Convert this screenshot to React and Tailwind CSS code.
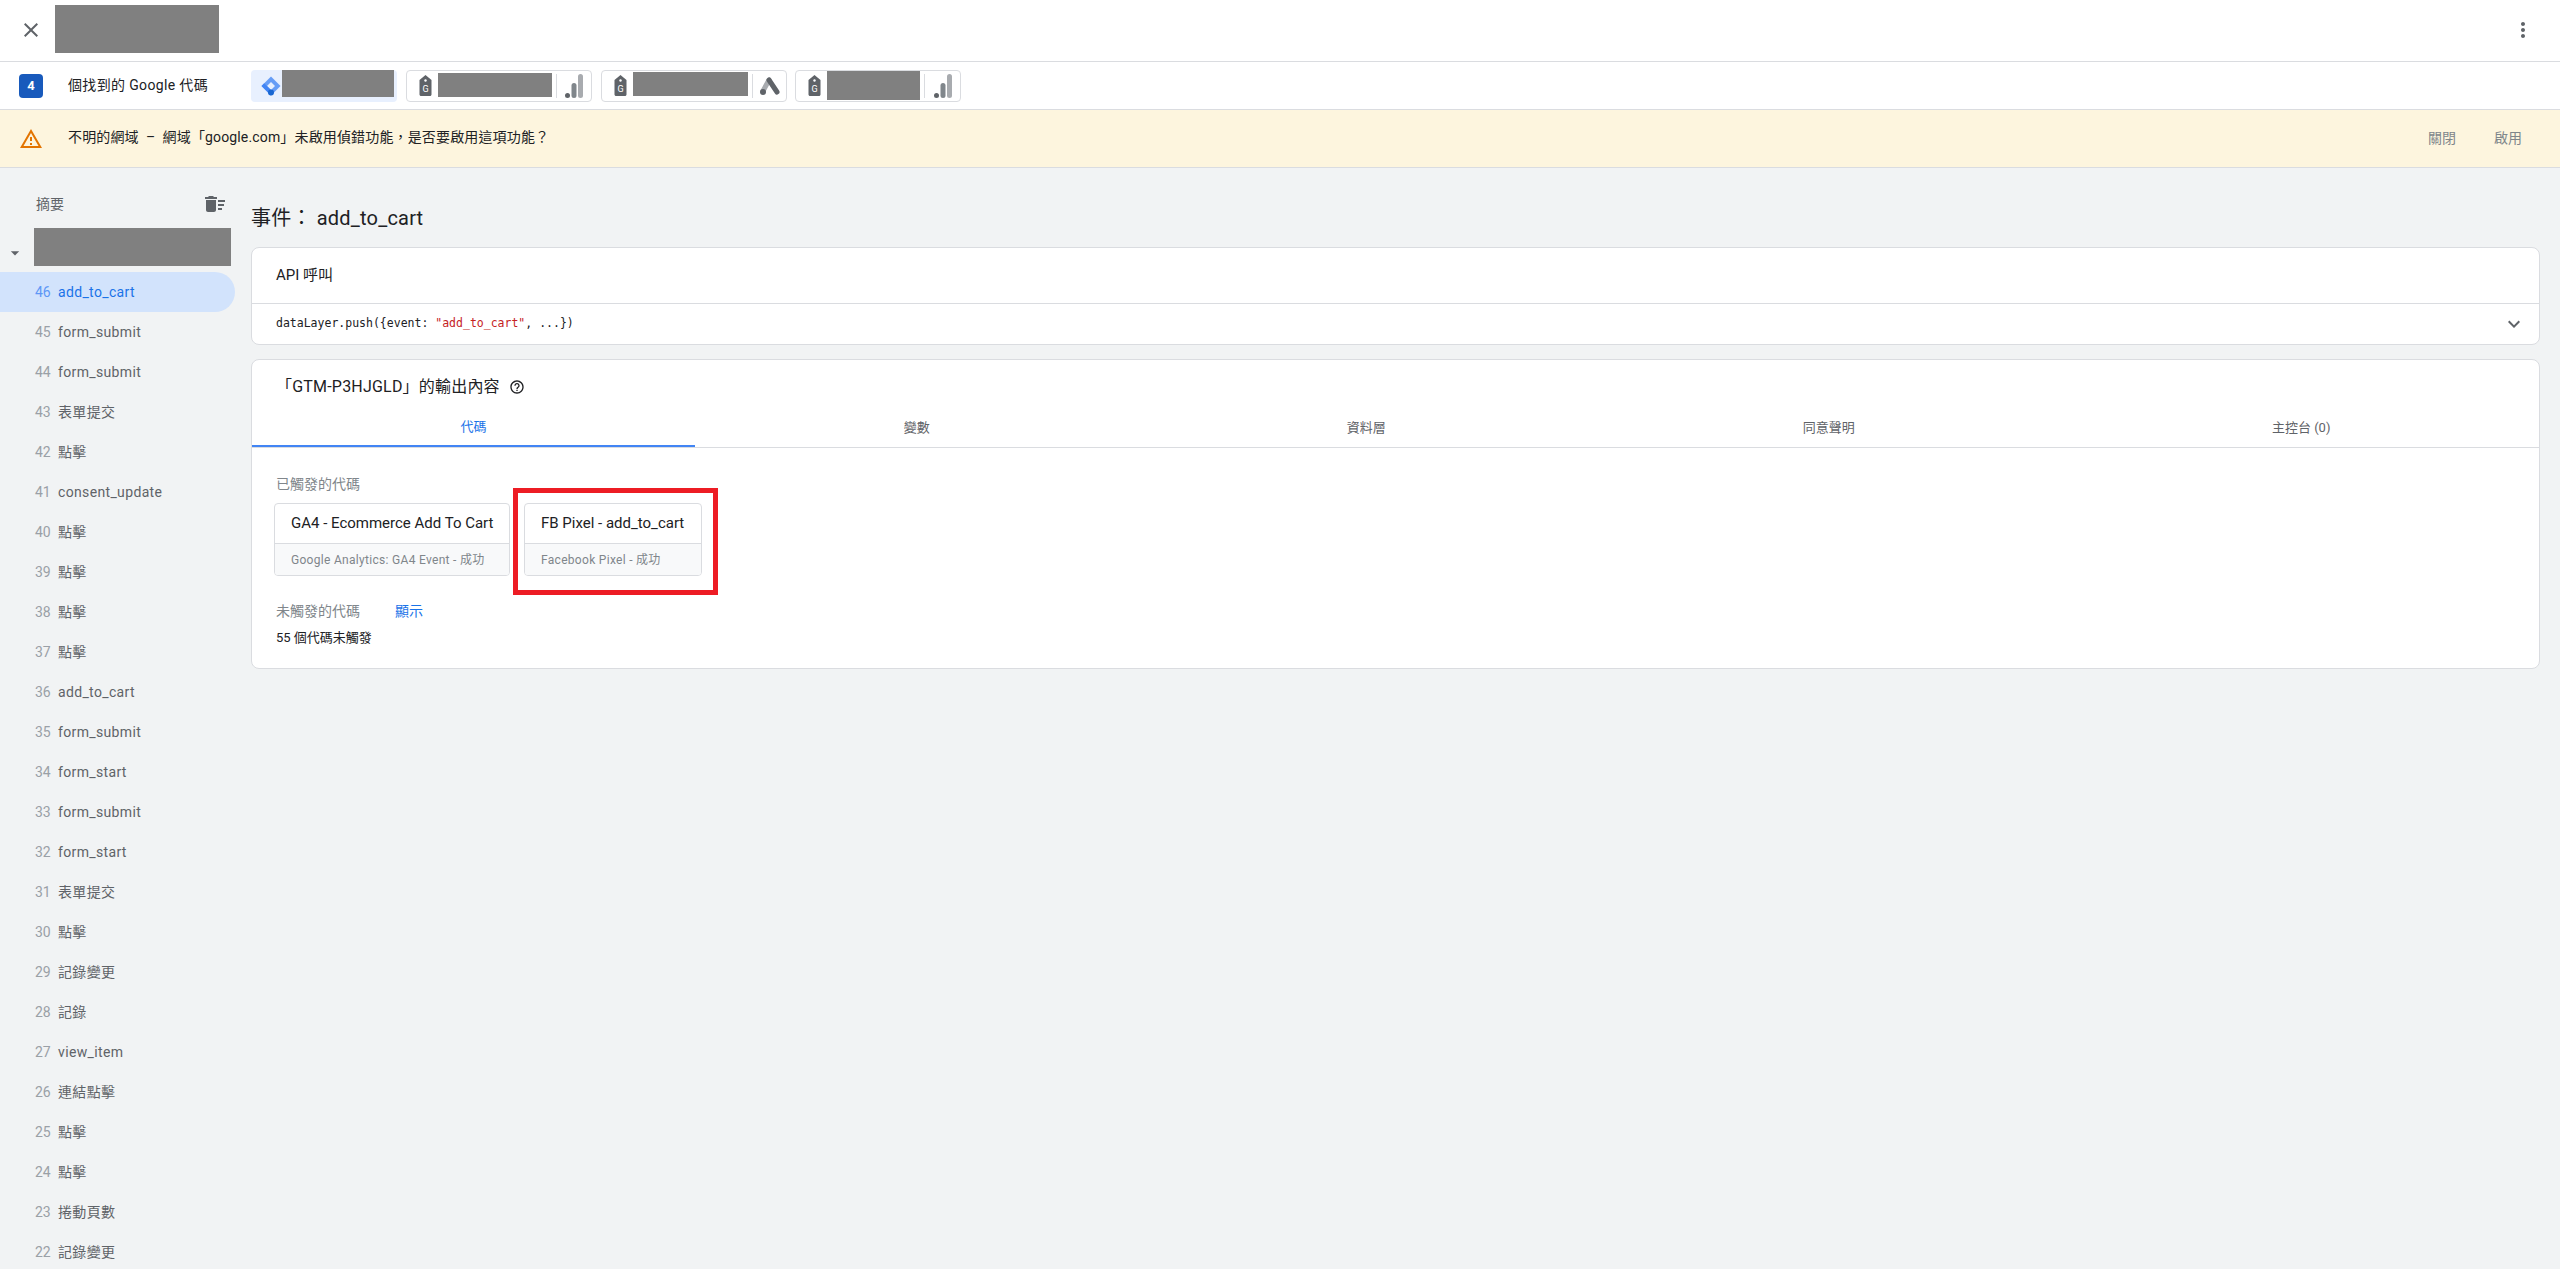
import React from 'react'

const EVENTS = [
  [46, 'add_to_cart'], [45, 'form_submit'], [44, 'form_submit'], [43, '表單提交'], [42, '點擊'],
  [41, 'consent_update'], [40, '點擊'], [39, '點擊'], [38, '點擊'], [37, '點擊'],
  [36, 'add_to_cart'], [35, 'form_submit'], [34, 'form_start'], [33, 'form_submit'], [32, 'form_start'],
  [31, '表單提交'], [30, '點擊'], [29, '記錄變更'], [28, '記錄'], [27, 'view_item'],
  [26, '連結點擊'], [25, '點擊'], [24, '點擊'], [23, '捲動頁數'], [22, '記錄變更'],
]

const TABS = ['代碼', '變數', '資料層', '同意聲明', '主控台 (0)']

function Icon({ d, size = 24, className = '' }) {
  return (
    <svg width={size} height={size} viewBox="0 0 24 24" fill="currentColor" className={`shrink-0 ${className}`}>
      <path d={d} />
    </svg>
  )
}

function GtmIcon() {
  return (
    <svg width="20" height="20" viewBox="0 0 20 20" className="shrink-0">
      <path d="M10 0.5L19.5 10L10 19.5L0.5 10Z" fill="#669df6" />
      <path d="M10 6L14 10L10 14L6 10Z" fill="#e8f0fe" />
      <path d="M0.5 10L3.2 7.3L10 14L10 19.5Z" fill="#4285f4" />
      <circle cx="10" cy="16.5" r="3" fill="#1967d2" />
    </svg>
  )
}

function TagIcon() {
  return (
    <svg width="13" height="21" viewBox="0 0 13 21" className="shrink-0">
      <path d="M6.5 0L12.5 5V19.5C12.5 20.3 11.8 21 11 21H2C1.2 21 .5 20.3 .5 19.5V5Z" fill="#5f6368" />
      <circle cx="6.5" cy="5.5" r="1.2" fill="#fff" />
      <text x="6.5" y="17" textAnchor="middle" fontSize="9" fontFamily="Roboto, sans-serif" fill="#fff">G</text>
    </svg>
  )
}

function BarsIcon() {
  return (
    <svg width="18" height="26" viewBox="0 0 18 26" className="shrink-0">
      <rect x="13" y="1" width="5" height="24" rx="2.5" fill="#a8abaf" />
      <rect x="6.5" y="10" width="5" height="15" rx="2.5" fill="#80868b" />
      <circle cx="2.5" cy="22.5" r="2.5" fill="#5f6368" />
    </svg>
  )
}

function AdsIcon() {
  return (
    <svg width="20" height="18" viewBox="0 0 20 18" className="shrink-0">
      <path d="M9 3L3 14" stroke="#a8abaf" strokeWidth="5" strokeLinecap="round" />
      <path d="M9 3L17 15" stroke="#5f6368" strokeWidth="5" strokeLinecap="round" />
      <circle cx="3" cy="15" r="3" fill="#5f6368" />
    </svg>
  )
}

// redacted block in the screenshot
function Gray({ className }) {
  return <div className={`bg-[#808080] shrink-0 ${className}`} />
}

function Chip({ className, boxClass, children }) {
  return (
    <div className={`h-8 flex items-start rounded-[4px] border border-[#dadce0] shrink-0 ${className}`}>
      <div className="w-[31px] h-full flex items-center pl-3 shrink-0"><TagIcon /></div>
      <Gray className={boxClass} />
      <div className="w-px h-6 mt-[3px] ml-1 bg-[#dadce0] shrink-0" />
      <div className="flex-1 h-full flex items-center justify-center">{children}</div>
    </div>
  )
}

function TagCard({ title, sub, className }) {
  return (
    <div className={`h-[73px] rounded-[4px] border border-[#dadce0] overflow-hidden shrink-0 ${className}`}>
      <div className="h-[39px] pl-4 flex items-center text-[15px] text-[#202124] whitespace-nowrap border-b border-[#dadce0] box-content">{title}</div>
      <div className="h-[32px] pl-4 flex items-center text-[12px] text-[#80868b] bg-[#f8f9fa] whitespace-nowrap tracking-[0.3px]">{sub}</div>
    </div>
  )
}

export default function App() {
  return (
    <div className="h-screen overflow-hidden flex flex-col bg-[#f1f3f4] font-['Roboto','Noto_Sans_CJK_TC',sans-serif]">

      {/* Top bar */}
      <div className="h-[62px] shrink-0 bg-white border-b border-[#dadce0] flex items-start pl-[19px] pr-[25px]">
        <Icon className="mt-[18px] text-[#5f6368]" d="M19 6.41L17.59 5 12 10.59 6.41 5 5 6.41 10.59 12 5 17.59 6.41 19 12 13.41 17.59 19 19 17.59 13.41 12z" />
        <Gray className="w-[164px] h-12 mt-[5px] ml-3" />
        <Icon className="mt-[18px] ml-auto text-[#5f6368]" d="M12 8c1.1 0 2-.9 2-2s-.9-2-2-2-2 .9-2 2 .9 2 2 2zm0 2c-1.1 0-2 .9-2 2s.9 2 2 2 2-.9 2-2-.9-2-2-2zm0 6c-1.1 0-2 .9-2 2s.9 2 2 2 2-.9 2-2-.9-2-2-2z" />
      </div>

      {/* Tags found row */}
      <div className="h-[48px] shrink-0 bg-white border-b border-[#dadce0] flex items-center pl-[19px]">
        <div className="w-6 h-6 rounded-[4px] bg-[#185abc] text-white text-[13px] font-bold flex items-center justify-center">4</div>
        <span className="ml-[25px] w-[183px] text-[14px] tracking-[0.35px] text-[#202124] whitespace-nowrap">個找到的 Google 代碼</span>
        <div className="w-[146px] h-8 rounded-[4px] bg-[#e8f0fe] flex items-start pl-[10px] shrink-0">
          <div className="h-full flex items-center mr-px"><GtmIcon /></div>
          <Gray className="w-[112px] h-[27px]" />
        </div>
        <Chip className="w-[186px] ml-[9px]" boxClass="w-[114px] h-6 mt-[2px]"><BarsIcon /></Chip>
        <Chip className="w-[186px] ml-[9px]" boxClass="w-[115px] h-6 mt-px"><AdsIcon /></Chip>
        <Chip className="w-[166px] ml-2" boxClass="w-[93px] h-[29px]"><BarsIcon /></Chip>
      </div>

      {/* Debug warning */}
      <div className="h-[58px] shrink-0 bg-[#fdf5de] border-b border-[#dadce0] flex items-center pl-[19px] pr-[38px]">
        <Icon className="text-[#e37400]" d="M12 5.99L19.53 19H4.47L12 5.99M12 2L1 21h22L12 2zm1 14h-2v2h2v-2zm0-6h-2v4h2v-4z" />
        <span className="ml-[25px] -mt-[2px] text-[14px] tracking-[0.15px] text-[#202124] whitespace-pre">不明的網域  –  網域「google.com」未啟用偵錯功能，是否要啟用這項功能？</span>
        <span className="ml-auto text-[14px] text-[#80868b]">關閉</span>
        <span className="ml-[38px] text-[14px] text-[#80868b]">啟用</span>
      </div>

      <div className="flex-1 min-h-0 flex">

        {/* Summary sidebar */}
        <div className="w-[251px] shrink-0 pt-6">
          <div className="h-6 pl-9 pr-[24px] flex items-center justify-between">
            <span className="text-[14px] text-[#5f6368]">摘要</span>
            <Icon className="text-[#5f6368]" d="M15 16h4v2h-4zm0-8h7v2h-7zm0 4h6v2h-6zM3 18c0 1.1.9 2 2 2h6c1.1 0 2-.9 2-2V8H3v10zM14 5h-3l-1-1H6L5 5H2v2h12z" />
          </div>
          <div className="mt-3 h-[38px] flex items-end">
            <Icon size={20} className="ml-[5px] mb-[3px] text-[#5f6368]" d="M7 10l5 5 5-5z" />
            <Gray className="w-[197px] h-[38px] ml-[9px]" />
          </div>
          <div className="mt-[6px]">
            {EVENTS.map(([num, name], i) => (
              <div
                key={num}
                className={`w-[235px] h-10 pl-[35px] flex items-center text-[14px] rounded-r-[20px] tracking-[0.35px] ${i === 0 ? 'bg-[#d2e3fc] text-[#1a73e8]' : 'text-[#5f6368]'}`}
              >
                <span className={`w-[23px] shrink-0 tracking-normal ${i === 0 ? 'text-[#5e97f6]' : 'text-[#9aa0a6]'}`}>{num}</span>
                <span>{name}</span>
              </div>
            ))}
          </div>
        </div>

        {/* Event detail */}
        <div className="flex-1 min-w-0 pr-5 pt-9">
          <h1 className="h-7 leading-7 text-[20px] tracking-[0.2px] font-normal text-[#202124] whitespace-nowrap">事件： add_to_cart</h1>

          <div className="mt-[15px] h-[98px] rounded-lg border border-[#dadce0] bg-white">
            <div className="h-[56px] pl-6 flex items-center border-b border-[#dadce0] text-[15px] text-[#202124]">API 呼叫</div>
            <div className="h-[40px] pl-6 pr-[13px] flex items-center justify-between">
              <code className="font-['DejaVu_Sans_Mono',monospace] text-[11.5px] text-[#202124] whitespace-pre">
                dataLayer.push({'{'}event: <span className="text-[#c5221f]">"add_to_cart"</span>, ...{'}'})
              </code>
              <Icon className="text-[#5f6368]" d="M16.59 8.59L12 13.17 7.41 8.59 6 10l6 6 6-6z" />
            </div>
          </div>

          <div className="mt-[14px] h-[310px] rounded-lg border border-[#dadce0] bg-white">
            <div className="h-[54px] pl-[24px] flex items-center text-[16px] tracking-[0.2px] text-[#202124]">
              <span>「GTM-P3HJGLD」的輸出內容</span>
              <Icon size={16} className="ml-[9px]" d="M11 18h2v-2h-2v2zm1-16C6.48 2 2 6.48 2 12s4.48 10 10 10 10-4.48 10-10S17.52 2 12 2zm0 18c-4.41 0-8-3.59-8-8s3.59-8 8-8 8 3.59 8 8-3.59 8-8 8zm0-14c-2.21 0-4 1.79-4 4h2c0-1.1.9-2 2-2s2 .9 2 2c0 2-3 1.75-3 5h2c0-2.25 3-2.5 3-5 0-2.21-1.79-4-4-4z" />
            </div>

            <div className="h-[33px] flex border-b border-[#dadce0] box-content">
              {TABS.map((t, i) => (
                <div
                  key={t}
                  className={`flex-auto h-[33px] pb-[6px] flex items-center justify-center text-[13px] ${i === 0 ? 'text-[#1a73e8] border-b-2 border-[#4285f4]' : 'text-[#5f6368]'}`}
                >
                  {t}
                </div>
              ))}
            </div>

            <div className="pl-6 pt-[26px]">
              <div className="h-5 leading-5 text-[14px] text-[#80868b]">已觸發的代碼</div>
              <div className="relative mt-[9px] flex gap-[14px] -ml-[2px]">
                <TagCard className="w-[236px]" title="GA4 - Ecommerce Add To Cart" sub="Google Analytics: GA4 Event - 成功" />
                <TagCard className="w-[178px]" title="FB Pixel - add_to_cart" sub="Facebook Pixel - 成功" />
                {/* red callout around the second tag */}
                <div className="absolute left-[239px] top-[-15px] w-[205px] h-[107px] border-[5px] border-[#ed1c24]" />
              </div>
              <div className="mt-[25px] h-5 flex items-center text-[14px] text-[#80868b]">
                <span>未觸發的代碼</span>
                <span className="ml-[35px] text-[#1a73e8]">顯示</span>
              </div>
              <div className="mt-[7px] h-5 flex items-center text-[13px] text-[#202124]">55 個代碼未觸發</div>
            </div>
          </div>
        </div>
      </div>
    </div>
  )
}
